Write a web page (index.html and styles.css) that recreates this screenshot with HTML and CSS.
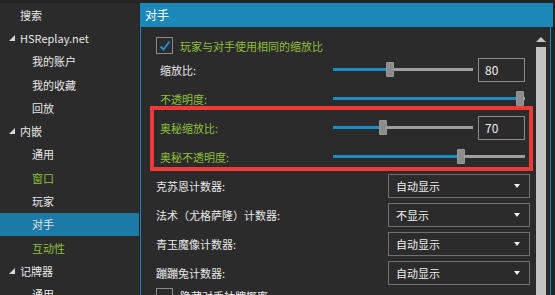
FILE: index.html
```html
<!DOCTYPE html>
<html lang="zh-CN">
<head>
<meta charset="utf-8">
<title>对手</title>
<link rel="stylesheet" href="styles.css">
</head>
<body>
<div class="app">
  <nav class="sidebar">
    <div class="item l0">搜索</div>
    <div class="item l0"><svg class="tri" width="6" height="6" viewBox="0 0 6 6"><polygon points="6,0 6,6 0,6"/></svg>HSReplay.net</div>
    <div class="item l1">我的账户</div>
    <div class="item l1">我的收藏</div>
    <div class="item l1">回放</div>
    <div class="item l0"><svg class="tri" width="6" height="6" viewBox="0 0 6 6"><polygon points="6,0 6,6 0,6"/></svg>内嵌</div>
    <div class="item l1">通用</div>
    <div class="item l1 green">窗口</div>
    <div class="item l1">玩家</div>
    <div class="item l1 selected">对手</div>
    <div class="item l1 green">互动性</div>
    <div class="item l0"><svg class="tri" width="6" height="6" viewBox="0 0 6 6"><polygon points="6,0 6,6 0,6"/></svg>记牌器</div>
    <div class="item l1">通用</div>
  </nav>
  <main class="main">
    <div class="header">对手</div>
    <div class="panel">
      <div class="content">
        <div class="check-row">
          <span class="cb"><svg width="14" height="14" viewBox="0 0 14 14"><polyline points="2.5,7.5 5.5,10.5 11.5,2.5" fill="none" stroke="#1e8fd0" stroke-width="2"/></svg></span>
          <span class="green">玩家与对手使用相同的缩放比</span>
        </div>
        <div class="row">
          <span class="label slabel">缩放比:</span>
          <div class="slider short"><div class="fill" style="width:53px"></div><div class="thumb"></div><div class="rest"></div></div>
          <div class="num">80</div>
        </div>
        <div class="row">
          <span class="label slabel green">不透明度:</span>
          <div class="slider long"><div class="fill" style="width:183px"></div><div class="thumb"></div><div class="rest"></div></div>
        </div>
        <div class="row">
          <span class="label slabel green">奥秘缩放比:</span>
          <div class="slider short"><div class="fill" style="width:46px"></div><div class="thumb"></div><div class="rest"></div></div>
          <div class="num">70</div>
        </div>
        <div class="row">
          <span class="label slabel green">奥秘不透明度:</span>
          <div class="slider long"><div class="fill" style="width:124px"></div><div class="thumb"></div><div class="rest"></div></div>
        </div>
        <div class="row">
          <span class="label dlabel">克苏恩计数器:</span>
          <div class="select">自动显示<svg class="arrow" width="6" height="4" viewBox="0 0 6 4"><polygon points="0,0 6,0 3,4"/></svg></div>
        </div>
        <div class="row">
          <span class="label dlabel">法术（尤格萨隆）计数器:</span>
          <div class="select">不显示<svg class="arrow" width="6" height="4" viewBox="0 0 6 4"><polygon points="0,0 6,0 3,4"/></svg></div>
        </div>
        <div class="row">
          <span class="label dlabel">青玉魔像计数器:</span>
          <div class="select">自动显示<svg class="arrow" width="6" height="4" viewBox="0 0 6 4"><polygon points="0,0 6,0 3,4"/></svg></div>
        </div>
        <div class="row">
          <span class="label dlabel">蹦蹦兔计数器:</span>
          <div class="select">自动显示<svg class="arrow" width="6" height="4" viewBox="0 0 6 4"><polygon points="0,0 6,0 3,4"/></svg></div>
        </div>
        <div class="check-row last">
          <span class="cb"></span>
          <span class="label">隐藏对手抽牌概率</span>
        </div>
        <div class="highlight"></div>
      </div>
      <div class="scrollbar">
        <svg class="up" width="10" height="5" viewBox="0 0 10 5"><polygon points="0,5 10,5 5,0"/></svg>
        <div class="sthumb"></div>
      </div>
    </div>
  </main>
</div>
</body>
</html>
```

FILE: styles.css
```css
* { box-sizing: border-box; }
html, body {
  margin: 0;
  padding: 0;
  width: 555px;
  height: 295px;
  overflow: hidden;
  background: #232323;
}
body {
  font-family: "Noto Sans CJK SC", "Noto Sans", sans-serif;
  font-size: 11px;
  color: #e8e8e8;
}
.app {
  display: flex;
  height: 295px;
  padding-top: 3px;
  background: #232323;
}
.sidebar {
  width: 139px;
  flex: none;
  background: #2b2b2b;
  overflow: hidden;
}
.item {
  height: 23.3px;
  display: flex;
  align-items: center;
  line-height: 16px;
  white-space: nowrap;
}
.item.l0 { padding-left: 20px; position: relative; }
.item.l1 { padding-left: 32px; }
.item .tri {
  fill: #d8d8d8;
  margin-left: -11px;
  margin-right: 5px;
}
.item.selected { background: #1b7aa6; }
.green { color: #8dbf3a; }

.main {
  width: 413px;
  margin-left: 1px;
  display: flex;
  flex-direction: column;
  flex: none;
}
.header {
  height: 24px;
  background: #1b88b7;
  color: #ffffff;
  font-size: 12px;
  line-height: 24px;
  padding-left: 5px;
}
.panel {
  flex: 1;
  display: flex;
  background: #2b2b2b;
  border-left: 1px solid #1b88b7;
  border-right: 1px solid #1b88b7;
  margin-right: 2px;
  overflow: hidden;
}
.content {
  flex: 1;
  position: relative;
  padding-top: 9px;
  padding-left: 15px;
}
.check-row {
  height: 19px;
  display: flex;
  align-items: center;
  gap: 7px;
  line-height: 16px;
  white-space: nowrap;
}
.check-row.last {
  margin-top: 1px;
  align-items: flex-start;
}
.cb {
  width: 17px;
  height: 17px;
  border: 1px solid #8a8a8a;
  background: #2b2b2b;
  display: flex;
  align-items: center;
  justify-content: center;
  flex: none;
}
.row {
  height: 29px;
  display: flex;
  align-items: center;
  white-space: nowrap;
}
.label { line-height: 16px; }
.slabel { width: 177px; padding-left: 4px; flex: none; }
.dlabel { width: 232px; flex: none; }
.slider {
  display: flex;
  align-items: center;
  height: 16px;
  flex: none;
}
.slider.short { width: 140px; }
.slider.long { width: 192px; }
.fill { height: 3px; background: #1c8cc4; flex: none; }
.thumb {
  width: 8px;
  height: 15px;
  background: #8c8c8c;
  border: 1px solid #9a9a9a;
  border-radius: 1px;
  flex: none;
}
.rest { flex: 1; height: 3px; background: #9e9e9e; }
.num {
  width: 47px;
  height: 24px;
  margin-left: 5px;
  border: 1px solid #8a8a8a;
  padding-left: 6px;
  font-size: 12px;
  line-height: 22px;
  color: #f0f0f0;
  flex: none;
}
.select {
  width: 142px;
  height: 24px;
  border: 1px solid #707070;
  padding-left: 7px;
  padding-right: 9px;
  display: flex;
  align-items: center;
  justify-content: space-between;
  line-height: 16px;
  color: #f0f0f0;
  flex: none;
}
.select .arrow { fill: #f0f0f0; }
.highlight {
  position: absolute;
  left: 9px;
  top: 79px;
  width: 383px;
  height: 65px;
  border: 4px solid #f03a3a;
  pointer-events: none;
}
.scrollbar {
  width: 10px;
  margin-right: 4px;
  padding-top: 10px;
  display: flex;
  flex-direction: column;
  align-items: center;
  flex: none;
}
.scrollbar .up { fill: #c4c4c4; flex: none; }
.sthumb {
  margin-top: 5px;
  width: 10px;
  flex: 1;
  background: #c4c4c4;
}
```
